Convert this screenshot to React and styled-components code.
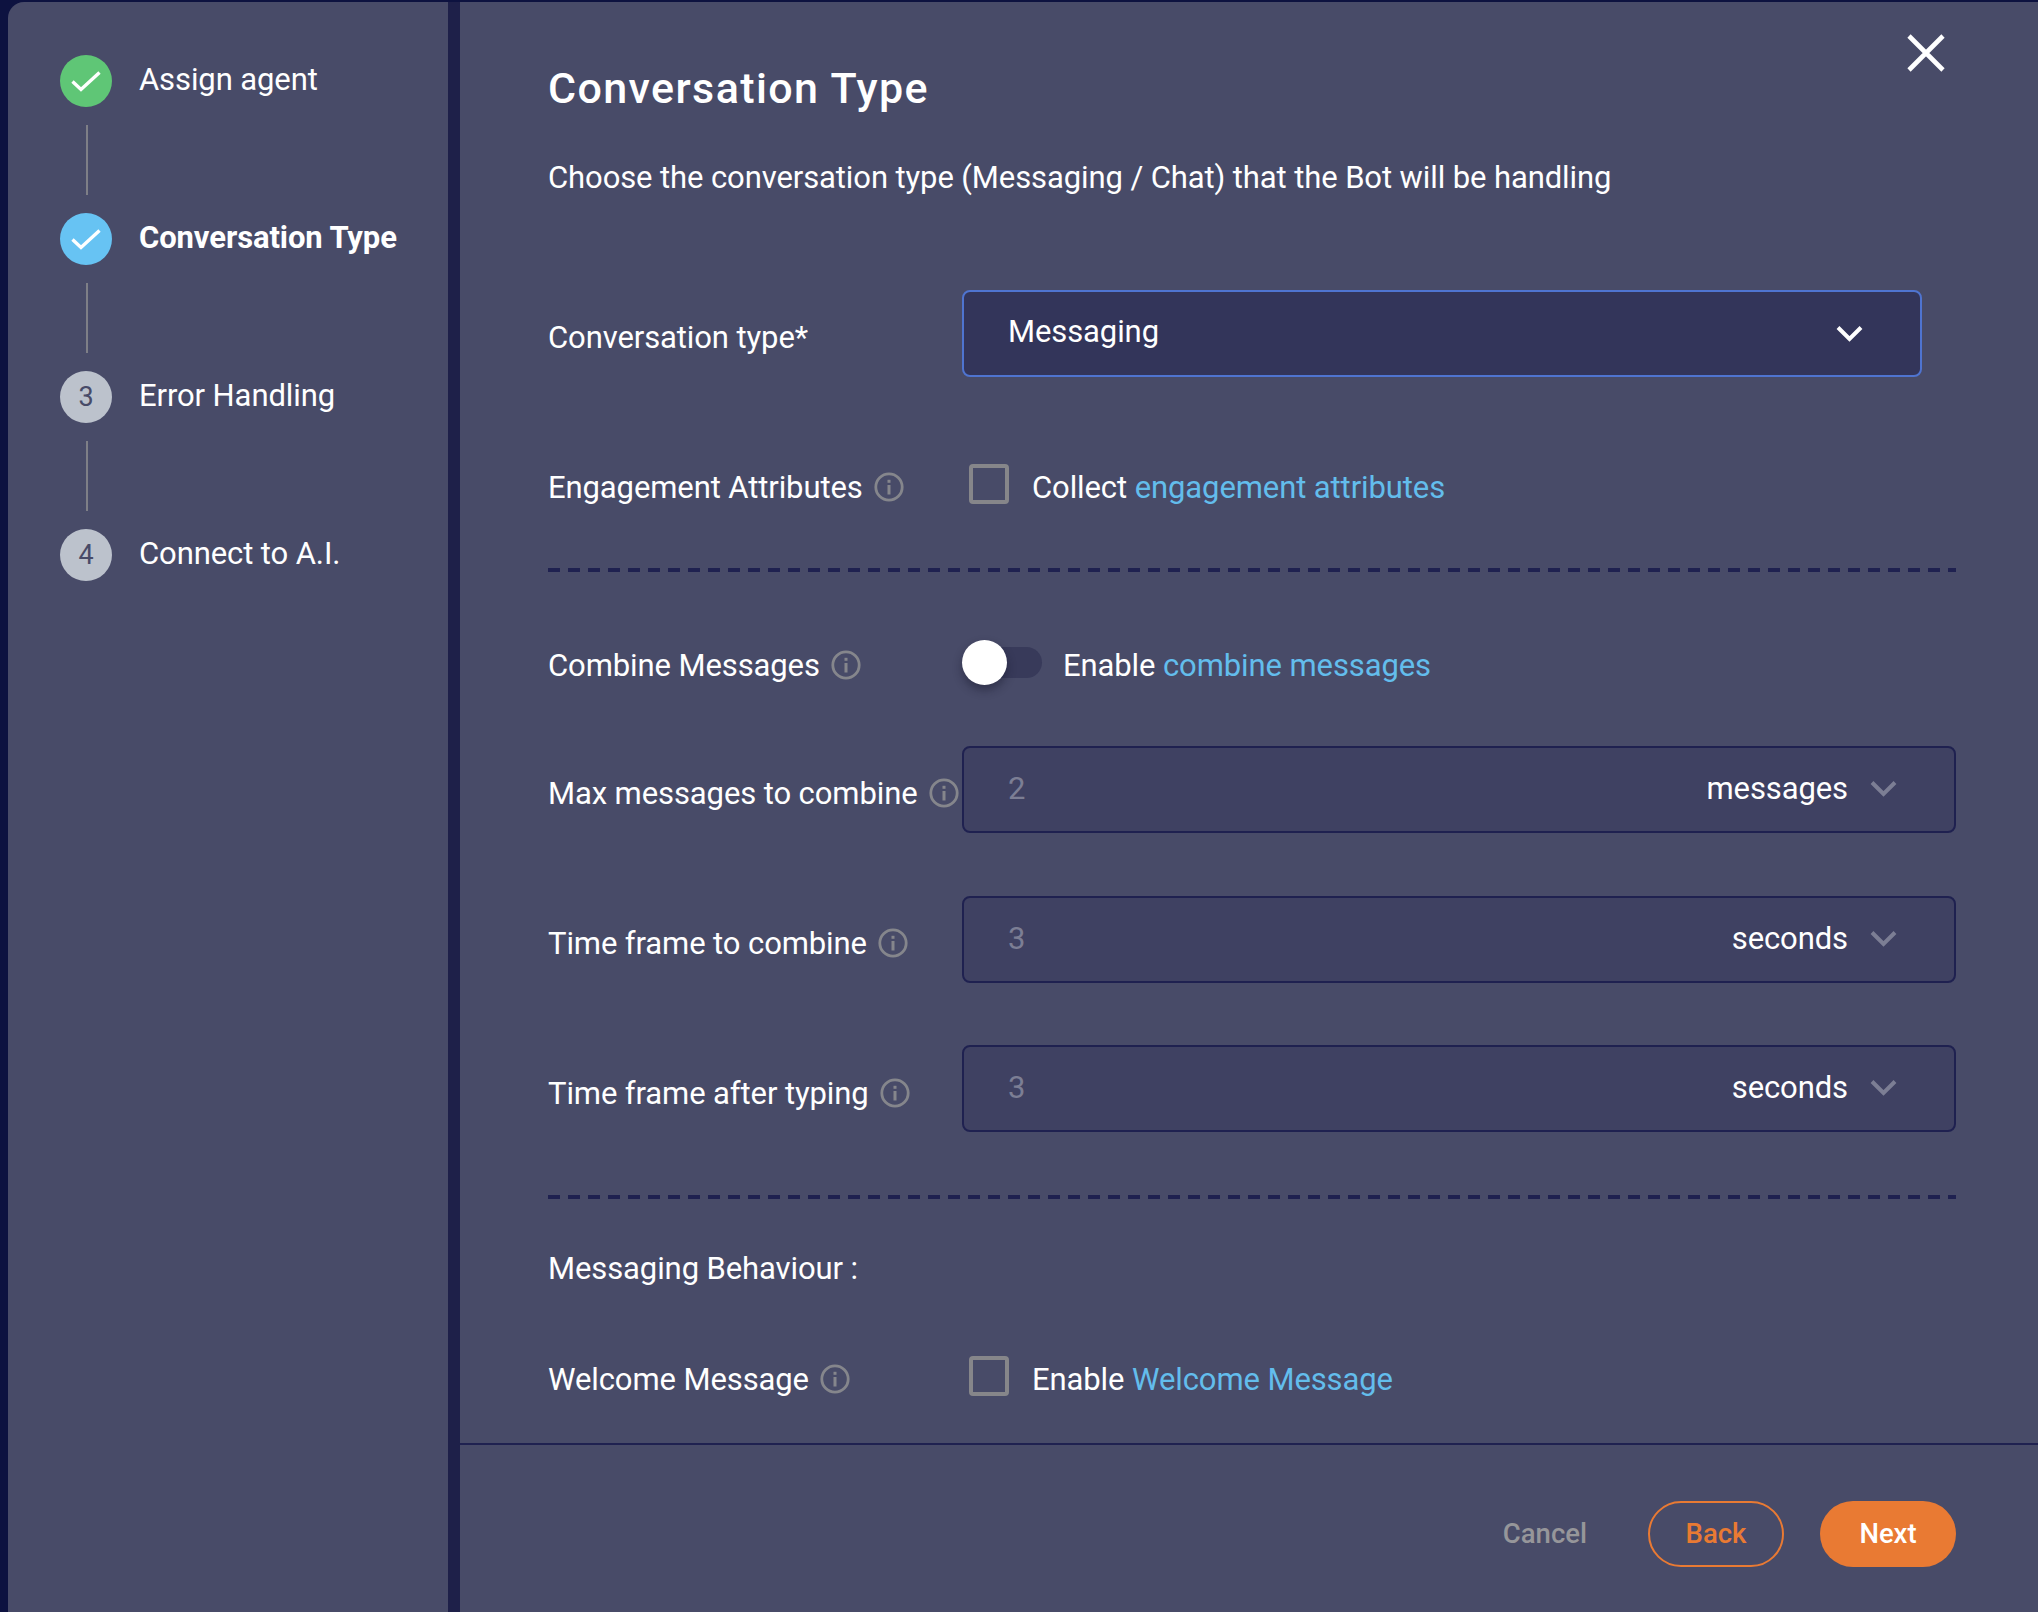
import React from 'react';
import styled, { createGlobalStyle } from 'styled-components';

const GlobalStyle = createGlobalStyle`
  html, body {
    margin: 0;
    height: 100%;
    overflow: hidden;
    background: #0d1240;
    font-family: Roboto, 'Liberation Sans', sans-serif;
  }
  * { box-sizing: border-box; }
`;

const Page = styled.div`
  display: flex;
  width: 2038px;
  height: 1612px;
  padding: 2px 0 0 8px;
  overflow: hidden;
`;

const Sidebar = styled.aside`
  flex: 0 0 440px;
  padding: 53px 0 0 52px;
  background: #484b68;
  border-top-left-radius: 16px;
`;

const Divider = styled.div`
  flex: 0 0 12px;
  background: #1e2049;
`;

const Step = styled.div`
  display: flex;
  align-items: center;
  gap: 27px;
  height: 52px;
`;

const StepCircle = styled.div`
  display: flex;
  align-items: center;
  justify-content: center;
  width: 52px;
  height: 52px;
  border-radius: 50%;
  color: #484b68;
  font-size: 27px;
  background: ${props => props.$color};
`;

const StepLabel = styled.span`
  margin-top: -3px;
  color: #fff;
  font-size: 31px;
  letter-spacing: -0.1px;
  font-weight: ${props => (props.$active ? 700 : 400)};
`;

const Connector = styled.div`
  width: 2px;
  height: 70px;
  margin: 18px 0 18px 26px;
  background: #7e7f87;
`;

const Main = styled.main`
  position: relative;
  flex: 1;
  display: flex;
  flex-direction: column;
  min-width: 0;
  background: #484b68;
`;

const CloseButton = styled.button`
  position: absolute;
  top: 32px;
  right: 93px;
  width: 38px;
  height: 38px;
  padding: 0;
  border: 0;
  background: transparent;
`;

const Form = styled.div`
  flex: 1;
  min-height: 0;
  padding: 64px 82px 0 88px;
  color: #fff;
`;

const Title = styled.h1`
  margin: 0;
  font-size: 43px;
  line-height: 44px;
  font-weight: 500;
  letter-spacing: 1.4px;
`;

const Description = styled.p`
  margin: 48px 0 0;
  font-size: 31px;
  line-height: 40px;
  letter-spacing: -0.1px;
`;

const Row = styled.div`
  display: flex;
  align-items: center;
  height: ${props => props.$height}px;
  margin-top: ${props => props.$top}px;
`;

const Label = styled.div`
  flex: 0 0 414px;
  display: flex;
  align-items: center;
  gap: 11px;
  white-space: nowrap;
  font-size: 31px;
  letter-spacing: -0.1px;
  padding-top: ${props => props.$offset || 0}px;
`;

const PlainLabel = styled.div`
  font-size: 31px;
  letter-spacing: -0.1px;
`;

const InfoWrap = styled.span`
  display: inline-flex;
  flex: 0 0 auto;
  width: 30px;
  height: 30px;
`;

const Select = styled.div`
  flex: 1;
  display: flex;
  align-items: center;
  justify-content: space-between;
  height: 87px;
  padding: 0 57px 0 44px;
  margin-right: 34px;
  background: #33355a;
  border: 2px solid #4f74d0;
  border-radius: 8px;
  font-size: 31px;
  letter-spacing: -0.1px;
`;

const SelectValue = styled.span`
  margin-bottom: 5px;
`;

const NumberField = styled.div`
  flex: 1;
  display: flex;
  align-items: center;
  height: 87px;
  padding: 0 57px 2px 44px;
  background: #3f4162;
  border: 2px solid #1f2150;
  border-radius: 8px;
  font-size: 31px;
  letter-spacing: -0.1px;
`;

const FieldValue = styled.span`
  flex: 1;
  color: #7c7e94;
`;

const FieldUnit = styled.span`
  margin-right: 22px;
`;

const Check = styled.div`
  flex: 0 0 40px;
  width: 40px;
  height: 40px;
  margin: 0 23px 6px 7px;
  border: 4px solid #86868a;
  border-radius: 4px;
`;

const OptionText = styled.span`
  font-size: 31px;
  letter-spacing: -0.1px;
`;

const OptionLink = styled.span`
  color: #63bdec;
`;

const Toggle = styled.div`
  position: relative;
  flex: 0 0 80px;
  height: 31px;
  margin: 0 21px 6px 0;
  border-radius: 16px;
  background: #383a5a;
`;

const ToggleKnob = styled.div`
  position: absolute;
  left: 0;
  top: -7px;
  width: 45px;
  height: 45px;
  border-radius: 50%;
  background: #fff;
  box-shadow: 0 5px 10px rgba(20, 20, 40, 0.45);
`;

const DashedLine = styled.div`
  height: 4px;
  margin-top: ${props => props.$top}px;
  background: repeating-linear-gradient(to right, #1f2150 0 12px, transparent 12px 20px);
`;

const Footer = styled.footer`
  flex: 0 0 169px;
  display: flex;
  justify-content: flex-end;
  align-items: flex-start;
  padding: 56px 82px 0 0;
  border-top: 2px solid #1f2150;
`;

const CancelButton = styled.button`
  height: 64px;
  margin-right: 61px;
  padding: 0;
  border: 0;
  background: transparent;
  color: #96969a;
  font: 500 27.5px Roboto, sans-serif;
`;

const BackButton = styled.button`
  width: 136px;
  height: 66px;
  margin-right: 36px;
  padding-bottom: 3px;
  border: 2px solid #e97a33;
  border-radius: 33px;
  background: transparent;
  color: #e97a33;
  font: 500 27.5px Roboto, sans-serif;
`;

const NextButton = styled.button`
  width: 136px;
  height: 66px;
  padding-bottom: 3px;
  border: 0;
  border-radius: 33px;
  background: #e97a33;
  color: #fff;
  font: 500 27.5px Roboto, sans-serif;
`;

const CheckIcon = () => (
  <svg width="32" height="24" viewBox="0 0 32 24" fill="none">
    <path d="M2.5 12.5 L11 20.5 L29.5 3.5" stroke="#fff" strokeWidth="3.4" />
  </svg>
);

const Chevron = ({ color, width = 27 }) => (
  <svg width={width} height={width * 0.65} viewBox="0 0 27 17.5" fill="none">
    <path d="M2 2.5 L13.5 14 L25 2.5" stroke={color} strokeWidth="4" />
  </svg>
);

const InfoIcon = () => (
  <InfoWrap>
    <svg width="30" height="30" viewBox="0 0 30 30" fill="none">
      <circle cx="15" cy="15" r="13.2" stroke="#85868c" strokeWidth="2.8" />
      <rect x="13.5" y="13" width="3" height="9.5" fill="#85868c" />
      <rect x="13.5" y="7.8" width="3" height="3" fill="#85868c" />
    </svg>
  </InfoWrap>
);

const steps = [
  { label: 'Assign agent', color: '#5fc676', done: true },
  { label: 'Conversation Type', color: '#67c3f3', done: true, active: true },
  { label: 'Error Handling', color: '#bcc2cc', number: 3 },
  { label: 'Connect to A.I.', color: '#bcc2cc', number: 4 },
];

const numberFields = [
  { label: 'Max messages to combine', value: 2, unit: 'messages', top: 58 },
  { label: 'Time frame to combine', value: 3, unit: 'seconds', top: 63 },
  { label: 'Time frame after typing', value: 3, unit: 'seconds', top: 62 },
];

export default function App() {
  return (
    <Page>
      <GlobalStyle />
      <Sidebar>
        {steps.map((step, index) => (
          <React.Fragment key={step.label}>
            <Step>
              <StepCircle $color={step.color}>
                {step.done ? <CheckIcon /> : step.number}
              </StepCircle>
              <StepLabel $active={step.active}>{step.label}</StepLabel>
            </Step>
            {index < steps.length - 1 && <Connector />}
          </React.Fragment>
        ))}
      </Sidebar>
      <Divider />
      <Main>
        <CloseButton aria-label="Close">
          <svg width="38" height="38" viewBox="0 0 38 38" fill="none">
            <path d="M2 2 L36 36 M36 2 L2 36" stroke="#fff" strokeWidth="4.6" />
          </svg>
        </CloseButton>
        <Form>
          <Title>Conversation Type</Title>
          <Description>
            Choose the conversation type (Messaging / Chat) that the Bot will be handling
          </Description>

          <Row $height={87} $top={92}>
            <Label $offset={7}>Conversation type*</Label>
            <Select>
              <SelectValue>Messaging</SelectValue>
              <Chevron color="#fff" />
            </Select>
          </Row>

          <Row $height={40} $top={90}>
            <Label>
              Engagement Attributes
              <InfoIcon />
            </Label>
            <Check />
            <OptionText>
              Collect <OptionLink>engagement attributes</OptionLink>
            </OptionText>
          </Row>

          <DashedLine $top={61} />

          <Row $height={46} $top={70}>
            <Label>
              Combine Messages
              <InfoIcon />
            </Label>
            <Toggle>
              <ToggleKnob />
            </Toggle>
            <OptionText>
              Enable <OptionLink>combine messages</OptionLink>
            </OptionText>
          </Row>

          {numberFields.map(field => (
            <Row key={field.label} $height={87} $top={field.top}>
              <Label $offset={field.top === 62 ? 9 : 7}>
                {field.label}
                <InfoIcon />
              </Label>
              <NumberField>
                <FieldValue>{field.value}</FieldValue>
                <FieldUnit>{field.unit}</FieldUnit>
                <Chevron color="#7c7e94" />
              </NumberField>
            </Row>
          ))}

          <DashedLine $top={63} />

          <Row $height={40} $top={49}>
            <PlainLabel>Messaging Behaviour :</PlainLabel>
          </Row>

          <Row $height={40} $top={71}>
            <Label>
              Welcome Message
              <InfoIcon />
            </Label>
            <Check />
            <OptionText>
              Enable <OptionLink>Welcome Message</OptionLink>
            </OptionText>
          </Row>
        </Form>
        <Footer>
          <CancelButton>Cancel</CancelButton>
          <BackButton>Back</BackButton>
          <NextButton>Next</NextButton>
        </Footer>
      </Main>
    </Page>
  );
}
